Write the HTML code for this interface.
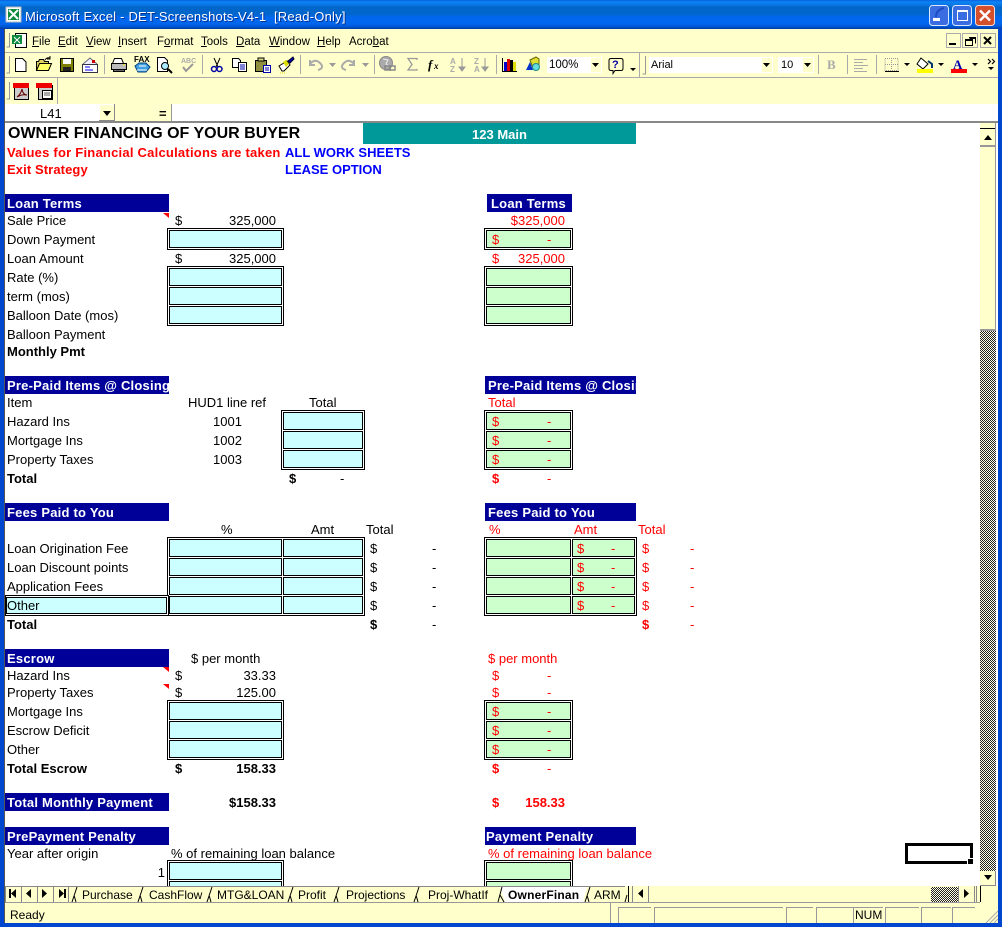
<!DOCTYPE html>
<html><head><meta charset="utf-8"><style>
html,body{margin:0;padding:0;width:1002px;height:927px;overflow:hidden;background:#fff}
body{position:relative;font-family:"Liberation Sans",sans-serif}
div,span,svg{position:absolute}
span{white-space:nowrap;font-size:13px;line-height:16px;color:#000;margin-top:1px}
span.m{font-size:11.5px}
u{text-decoration:underline}
.r{color:#f00}.bd{font-weight:bold}.bl{color:#00f}
.h{background:#000099;height:18px;overflow:hidden}
.h span{color:#fff;font-weight:bold;top:1px;left:2px;letter-spacing:.22px}
.o{border:1px solid #000;background:#fff;box-sizing:border-box}
.c{border:1px solid #000;box-sizing:border-box;height:20px;background:#ccffff}
.g{background:#ccffcc}
.ck{background:conic-gradient(#222 25%,#ffffe8 0 50%,#222 0 75%,#ffffe8 0) 0 0/2px 2px}
.cr{background:#ffffcc}
.st{top:907px;height:16px;border-left:1px solid #999;border-top:1px solid #999;box-sizing:border-box}
</style></head><body>

<!-- title bar -->
<div style="left:0;top:0;width:1002px;height:29px;background:linear-gradient(#0a5fe0 0,#0a86f5 2px,#0a74e6 5px,#0066c8 7px,#0066cc 14px,#0068ee 17px,#0066ee 24px,#0052d0 27px,#003c9c 29px)"></div>
<span style="left:25px;top:8px;color:#fff;font-size:13px;letter-spacing:.21px;text-shadow:1px 1px 0 #003090">Microsoft Excel - DET-Screenshots-V4-1&nbsp; [Read-Only]</span>

<!-- chrome base -->
<div class="cr" style="left:4px;top:29px;width:994px;height:75px"></div>
<div style="left:4px;top:52px;width:994px;height:1px;background:#aaa"></div>
<div style="left:4px;top:77px;width:994px;height:1px;background:#aaa"></div>
<div style="left:57px;top:78px;width:1px;height:26px;background:#aaa"></div>

<!-- menu -->
<span class="m" style="left:32px;top:33px"><u>F</u>ile</span>
<span class="m" style="left:58px;top:33px"><u>E</u>dit</span>
<span class="m" style="left:86px;top:33px"><u>V</u>iew</span>
<span class="m" style="left:118px;top:33px"><u>I</u>nsert</span>
<span class="m" style="left:157px;top:33px">F<u>o</u>rmat</span>
<span class="m" style="left:201px;top:33px"><u>T</u>ools</span>
<span class="m" style="left:236px;top:33px"><u>D</u>ata</span>
<span class="m" style="left:269px;top:33px"><u>W</u>indow</span>
<span class="m" style="left:317px;top:33px"><u>H</u>elp</span>
<span class="m" style="left:349px;top:33px">Acro<u>b</u>at</span>

<!-- toolbar boxes -->
<div style="left:547px;top:57px;width:55px;height:16px;background:#fff"></div>
<div class="cr" style="left:591px;top:58px;width:10px;height:14px"></div>
<span class="m" style="left:549px;top:56px">100%</span>
<div style="left:649px;top:57px;width:124px;height:16px;background:#fff"></div>
<div class="cr" style="left:762px;top:58px;width:10px;height:14px"></div>
<span class="m" style="left:651px;top:56px;font-size:11px">Arial</span>
<div style="left:778px;top:57px;width:36px;height:16px;background:#fff"></div>
<div class="cr" style="left:803px;top:58px;width:10px;height:14px"></div>
<span class="m" style="left:781px;top:56px;font-size:11px">10</span>

<!-- formula row -->
<div style="left:4px;top:104px;width:994px;height:18px;background:#fff"></div>
<div class="cr" style="left:99px;top:104px;width:73px;height:18px"></div>
<div style="left:171px;top:104px;width:1px;height:18px;background:#999"></div>
<div class="cr" style="left:99px;top:104px;width:16px;height:17px;box-shadow:inset -1px -1px 0 #888,inset 1px 1px 0 #fff"></div>
<svg style="left:99px;top:104px" width="16" height="17"><path d="M4 7h8l-4 5z" fill="#000"/></svg>
<span style="left:40px;top:105px">L41</span>
<span class="bd" style="left:159px;top:105px">=</span>
<div style="left:4px;top:121px;width:994px;height:2px;background:#888"></div>

<!-- SVG icons -->
<svg style="left:0;top:0" width="1002" height="104" viewBox="0 0 1002 104">
<!-- title icon -->
<rect x="6" y="7" width="15" height="15" fill="#fff" stroke="#bbb"/><rect x="8" y="9" width="11" height="11" fill="#0f8a3c"/><path d="M9 10l9 9M18 10l-9 9" stroke="#fff" stroke-width="2"/>
<!-- window buttons -->
<rect x="929.5" y="5.5" width="19" height="20" rx="3" fill="#3a6ee0" stroke="#dce8ff"/><rect x="933" y="18" width="7" height="3" fill="#fff"/><path d="M944 8q-8 2-8 9" stroke="#1c4cc4" stroke-width="2" fill="none"/>
<rect x="952.5" y="5.5" width="19" height="20" rx="3" fill="#3a6ee0" stroke="#dce8ff"/><rect x="957.5" y="11.5" width="10" height="9" fill="none" stroke="#fff"/><rect x="957" y="10" width="11" height="2" fill="#fff"/>
<rect x="975.5" y="5.5" width="19" height="20" rx="3" fill="#d4502c" stroke="#f4dcd4"/><path d="M980 10.5l10 10M990 10.5l-10 10" stroke="#fff" stroke-width="2.4"/>
<!-- grips -->
<path d="M9.5 33v14h-3M9.5 56v17h-3M9.5 82v17h-3M645.5 56v18h-3" stroke="#999" fill="none"/>
<!-- menu doc icon -->
<rect x="15.5" y="33.5" width="11" height="14" fill="#fff" stroke="#000"/><rect x="12" y="35" width="10" height="9" fill="#0a8a3a"/><path d="M14 37l6 6M20 37l-6 6" stroke="#fff"/>
<!-- mdi buttons -->
<g fill="#ffffcc" stroke="#aaa"><rect x="946.5" y="33.5" width="14" height="14"/><rect x="962.5" y="33.5" width="15" height="14"/><rect x="980.5" y="33.5" width="15" height="14"/></g>
<rect x="949" y="43" width="7" height="2" fill="#000"/>
<path d="M969.5 38.5h6v5M965.5 40.5h7v5h-7z" stroke="#000" fill="none"/><path d="M969 37.5h7M965 39.5h8" stroke="#000"/>
<path d="M984 37l7 7M991 37l-7 7" stroke="#000" stroke-width="2"/>
<!-- new -->
<path d="M15.5 58.5h7l3.5 3.5v9.500h-10.500z" fill="#fff" stroke="#000"/>
<!-- open -->
<path d="M36.500 70.500v-9h2l1-2h4l1 2h4v2" fill="#e0d060" stroke="#000"/><path d="M36.500 70.500l3-7h12l-3 7z" fill="#ffff66" stroke="#000"/><path d="M45 60q2-3 5-2M50 56v3h-3" fill="none" stroke="#000"/>
<!-- save -->
<rect x="60.500" y="58.500" width="13" height="13" fill="#808000" stroke="#000"/><rect x="63" y="59" width="8" height="5" fill="#fff"/><rect x="63" y="67" width="8" height="4" fill="#222"/>
<!-- mail preview -->
<path d="M83 64l7-6 7 6" fill="#eef" stroke="#667"/><rect x="82.500" y="64.500" width="15" height="8" fill="#fff" stroke="#334"/><path d="M85 67h5M85 70h8" stroke="#00f"/><rect x="92" y="60" width="3" height="3" fill="#c00"/>
<!-- print -->
<path d="M114.500 58.500h7l2 5h-11z" fill="#fff" stroke="#000"/><rect x="111.500" y="63.500" width="15" height="6" fill="#bbb" stroke="#000"/><rect x="113.500" y="69.500" width="11" height="2" fill="#666" stroke="#000"/><path d="M123 65h2" stroke="#ff0"/>
<!-- fax -->
<text x="134" y="62" font-family="Liberation Sans" font-size="8" font-weight="bold" fill="#000">FAX</text>
<path d="M135 66l4-3h7l4 4-4 5h-8z" fill="#40a0e0" stroke="#004080"/><path d="M139 66h7M137 70h10" stroke="#fff"/>
<!-- preview -->
<path d="M157.500 57.500h7l3 3v11h-10z" fill="#fff" stroke="#000"/><circle cx="165" cy="66" r="3.500" fill="#aef" stroke="#000"/><path d="M168 69l4 4" stroke="#000" stroke-width="2"/>
<!-- spell -->
<text x="181" y="63" font-family="Liberation Sans" font-size="7" font-weight="bold" fill="#aaa">ABC</text><path d="M183 67l3 4 7-7" stroke="#999" stroke-width="2" fill="none"/>
<!-- seps -->
<path d="M104.500 55v19M202.500 55v19M300.500 55v19M374.500 55v19M496.500 55v19M639.500 52v25M818.500 55v19M847.500 55v19M876.500 55v19" stroke="#aaa"/>
<!-- cut -->
<path d="M214 58l4 9M220 58l-4 9" stroke="#000"/><circle cx="214" cy="69" r="2.500" fill="none" stroke="#00a" stroke-width="1.500"/><circle cx="219.500" cy="69" r="2.500" fill="none" stroke="#00a" stroke-width="1.500"/>
<!-- copy -->
<path d="M232.500 58.500h6l2 2v7h-8z" fill="#fff" stroke="#000"/><rect x="238.500" y="62.500" width="8" height="9" fill="#fff" stroke="#000"/><path d="M240 65h5M240 67h5M240 69h5" stroke="#00a"/>
<!-- paste -->
<rect x="255.500" y="60.500" width="11" height="11" fill="#909040" stroke="#000"/><rect x="258" y="58" width="6" height="3" fill="#dd8" stroke="#000"/><rect x="263.500" y="65.500" width="7" height="7" fill="#fff" stroke="#00a"/><path d="M265 68h4M265 70h4" stroke="#00a"/>
<!-- brush -->
<path d="M279 66l8-5 3 4-6 6h-2z" fill="#fff" stroke="#000"/><path d="M283 62l3 5 3-3-3-4z" fill="#dd0"/><path d="M288 61l5-4 1 2-4 4z" fill="#00a" stroke="#003"/><path d="M280 73h6" stroke="#dd0" stroke-dasharray="1 1"/>
<!-- undo/redo -->
<path d="M310 60v5h5M310 64q5-6 10-1t-2 7" stroke="#aaa" stroke-width="2" fill="none"/><path d="M329 63h7l-3.500 4z" fill="#999"/>
<path d="M354 60v5h-5M354 64q-5-6-10-1t2 7" stroke="#aaa" stroke-width="2" fill="none"/><path d="M362 63h7l-3.500 4z" fill="#999"/>
<!-- globe -->
<circle cx="386" cy="63" r="6.500" fill="#aaa" stroke="#888"/><path d="M383 59l5 1-2 4 3 2" stroke="#eee" fill="none"/><rect x="385" y="66" width="5" height="4" fill="none" stroke="#888" stroke-width="1.500"/><rect x="390" y="66" width="5" height="4" fill="none" stroke="#888" stroke-width="1.500"/>
<!-- sigma -->
<path d="M417 60v-1.500h-9l4 6-4 5.500h9v-1" fill="none" stroke="#999" stroke-width="1.300"/>
<!-- fx -->
<text x="428" y="69" font-family="Liberation Serif" font-size="13" font-style="italic" font-weight="bold" fill="#000">f</text><text x="434" y="69" font-family="Liberation Serif" font-size="9" font-style="italic" font-weight="bold" fill="#000">x</text>
<!-- sort -->
<text x="450" y="64" font-family="Liberation Sans" font-size="8" font-weight="bold" fill="#aaa">A</text><text x="450" y="72" font-family="Liberation Sans" font-size="8" font-weight="bold" fill="#aaa">Z</text><path d="M462 58v12M459 67l3 4 3-4z" stroke="#999" fill="#999"/>
<text x="474" y="64" font-family="Liberation Sans" font-size="8" font-weight="bold" fill="#aaa">Z</text><text x="474" y="72" font-family="Liberation Sans" font-size="8" font-weight="bold" fill="#aaa">A</text><path d="M485 58v12M482 67l3 4 3-4z" stroke="#999" fill="#999"/>
<!-- chart -->
<path d="M502.500 58v13.500H517" stroke="#000" fill="none"/><rect x="504" y="62" width="3" height="9" fill="#00c"/><rect x="507" y="59" width="3" height="12" fill="#d00"/><rect x="510" y="60" width="3" height="11" fill="#000"/><rect x="513" y="62" width="3" height="9" fill="#dd0"/>
<!-- map -->
<path d="M530 60l6-3 3 2v6l-6 3z" fill="#dd3" stroke="#660"/><path d="M526 70l4-8 3 8z" fill="#03c"/><circle cx="536" cy="67" r="3.500" fill="#6dd" stroke="#288"/>
<!-- dropdowns -->
<g fill="#000"><path d="M592 63h7l-3.500 4zM630 68h6l-3 3zM763 63h7l-3.500 4zM804 63h7l-3.500 4zM904 63h6l-3 3zM938 63h6l-3 3zM972 63h6l-3 3zM988 67h6l-3 3z"/></g>
<!-- help -->
<path d="M611 58.500h10q2 0 2 2v8q0 2-2 2h-6l-2 3v-3h-2q-2 0-2-2v-8q0-2 2-2z" fill="#ffffcc" stroke="#000"/><text x="612" y="68" font-family="Liberation Sans" font-size="11" font-weight="bold" fill="#00a">?</text>
<!-- B -->
<text x="827" y="69" font-family="Liberation Serif" font-size="13" font-weight="bold" fill="#aaa">B</text>
<!-- align -->
<path d="M854 59.500h13M854 62.500h9M854 65.500h14M854 68.500h9M854 71.500h13" stroke="#aaa"/>
<!-- borders -->
<path d="M885 58.500h13v12h-13zM891.500 58v12M885 64.500h13" stroke="#999" stroke-dasharray="1 1" fill="none"/><path d="M885 71.500h14" stroke="#000"/>
<!-- fill -->
<path d="M921 58l7 6-5 5-6-5z" fill="#fff" stroke="#000"/><path d="M928 61l4 3v4" stroke="#036" stroke-width="2" fill="none"/><rect x="917" y="69" width="16" height="4" fill="#ff0"/>
<!-- font colour -->
<text x="953" y="69" font-family="Liberation Serif" font-size="13" font-weight="bold" fill="#00a">A</text><rect x="951" y="69" width="16" height="4" fill="#f00"/>
<!-- chevrons -->
<path d="M988 59l2.500 2.500-2.500 2.500M992 59l2.500 2.500-2.500 2.500" stroke="#000" stroke-width="1.200" fill="none"/>
<!-- pdf -->
<rect x="14.500" y="83.500" width="14" height="16" fill="#ccc" stroke="#000"/><rect x="13" y="83" width="16" height="5" fill="#e00"/><path d="M17 97q4-3 5-8 1 6 5 6-5-1-10 2" fill="none" stroke="#600"/>
<rect x="38.500" y="85.500" width="14" height="14" fill="#ccc" stroke="#000"/><rect x="36" y="83" width="16" height="5" fill="#e00"/><rect x="42.500" y="90.500" width="9" height="8" fill="#fff" stroke="#000"/><path d="M44 93h6M44 95h6" stroke="#555"/>
</svg>

<!-- sheet text and cells -->
<div style="left:363px;top:123px;width:273px;height:21px;background:#009999"></div>
<span class="bd" style="left:363px;width:273px;text-align:center;top:126px;color:#fff">123 Main</span>
<span class="bd" style="left:8px;top:125px;font-size:16px">OWNER FINANCING OF YOUR BUYER</span>
<span class="bd r" style="left:7px;top:144px;letter-spacing:.23px">Values for Financial Calculations are taken</span>
<span class="bd bl" style="left:285px;top:144px">ALL WORK SHEETS</span>
<span class="bd r" style="left:7px;top:161px;letter-spacing:.1px">Exit Strategy</span>
<span class="bd bl" style="left:285px;top:161px">LEASE OPTION</span>

<!-- Loan terms left -->
<div class="h" style="left:5px;top:194px;width:164px"><span>Loan Terms</span></div>
<svg style="left:160px;top:212px" width="10" height="8"><path d="M3 1h6v5z" fill="#f00"/></svg>
<span style="left:7px;top:212px">Sale Price</span>
<span style="left:175px;top:212px">$</span><span style="right:726px;top:212px">325,000</span>
<span style="left:7px;top:231px">Down Payment</span>
<span style="left:7px;top:250px">Loan Amount</span>
<span style="left:175px;top:250px">$</span><span style="right:726px;top:250px">325,000</span>
<span style="left:7px;top:269px">Rate (%)</span>
<span style="left:7px;top:288px">term (mos)</span>
<span style="left:7px;top:307px">Balloon Date (mos)</span>
<span style="left:7px;top:326px">Balloon Payment</span>
<span class="bd" style="left:7px;top:343px">Monthly Pmt</span>
<div class="o" style="left:167px;top:228px;width:117px;height:22px"></div><div class="c" style="left:169px;top:230px;width:113px;height:18px"></div>
<div class="o" style="left:167px;top:266px;width:117px;height:60px"></div>
<div class="c" style="left:169px;top:268px;width:113px;height:18px"></div><div class="c" style="left:169px;top:287px;width:113px;height:18px"></div><div class="c" style="left:169px;top:306px;width:113px;height:18px"></div>

<!-- Loan terms right -->
<div class="h" style="left:487px;top:194px;width:85px"><span style="left:4px">Loan Terms</span></div>
<span class="r" style="right:437px;top:212px">$325,000</span>
<div class="o" style="left:484px;top:228px;width:89px;height:22px"></div><div class="c g" style="left:486px;top:230px;width:85px;height:18px"></div>
<span class="r" style="left:492px;top:231px">$</span><span class="r" style="left:547px;top:231px">-</span>
<span class="r" style="left:492px;top:250px">$</span><span class="r" style="right:437px;top:250px">325,000</span>
<div class="o" style="left:484px;top:266px;width:89px;height:60px"></div>
<div class="c g" style="left:486px;top:268px;width:85px;height:18px"></div><div class="c g" style="left:486px;top:287px;width:85px;height:18px"></div><div class="c g" style="left:486px;top:306px;width:85px;height:18px"></div>

<!-- Prepaid left -->
<div class="h" style="left:5px;top:376px;width:164px"><span>Pre-Paid Items @ Closing</span></div>
<span style="left:7px;top:394px">Item</span><span style="left:188px;top:394px">HUD1 line ref</span><span style="left:309px;top:394px">Total</span>
<span style="left:7px;top:413px">Hazard Ins</span><span style="left:213px;top:413px">1001</span>
<span style="left:7px;top:432px">Mortgage Ins</span><span style="left:213px;top:432px">1002</span>
<span style="left:7px;top:451px">Property Taxes</span><span style="left:213px;top:451px">1003</span>
<span class="bd" style="left:7px;top:470px">Total</span><span class="bd" style="left:289px;top:470px">$</span><span style="left:340px;top:470px">-</span>
<div class="o" style="left:281px;top:410px;width:84px;height:60px"></div>
<div class="c" style="left:283px;top:412px;width:80px;height:18px"></div><div class="c" style="left:283px;top:431px;width:80px;height:18px"></div><div class="c" style="left:283px;top:450px;width:80px;height:18px"></div>

<!-- Prepaid right -->
<div class="h" style="left:485px;top:376px;width:151px"><span style="left:3px">Pre-Paid Items @ Closing</span></div>
<span class="r" style="left:488px;top:394px">Total</span>
<div class="o" style="left:484px;top:410px;width:89px;height:60px"></div>
<div class="c g" style="left:486px;top:412px;width:85px;height:18px"></div><div class="c g" style="left:486px;top:431px;width:85px;height:18px"></div><div class="c g" style="left:486px;top:450px;width:85px;height:18px"></div>
<span class="r" style="left:492px;top:413px">$</span><span class="r" style="left:547px;top:413px">-</span>
<span class="r" style="left:492px;top:432px">$</span><span class="r" style="left:547px;top:432px">-</span>
<span class="r" style="left:492px;top:451px">$</span><span class="r" style="left:547px;top:451px">-</span>
<span class="r bd" style="left:492px;top:470px">$</span><span class="r" style="left:547px;top:470px">-</span>

<!-- Fees left -->
<div class="h" style="left:5px;top:503px;width:164px"><span>Fees Paid to You</span></div>
<span style="left:221px;top:521px">%</span><span style="left:311px;top:521px">Amt</span><span style="left:366px;top:521px">Total</span>
<div class="o" style="left:167px;top:537px;width:198px;height:79px"></div>
<div class="o" style="left:5px;top:595px;width:164px;height:21px"></div>
<div class="c" style="left:6px;top:597px;width:161px;height:17px"></div>
<div class="c" style="left:169px;top:539px;width:113px;height:18px"></div><div class="c" style="left:283px;top:539px;width:80px;height:18px"></div>
<div class="c" style="left:169px;top:558px;width:113px;height:18px"></div><div class="c" style="left:283px;top:558px;width:80px;height:18px"></div>
<div class="c" style="left:169px;top:577px;width:113px;height:18px"></div><div class="c" style="left:283px;top:577px;width:80px;height:18px"></div>
<div class="c" style="left:169px;top:596px;width:113px;height:18px"></div><div class="c" style="left:283px;top:596px;width:80px;height:18px"></div>
<span style="left:7px;top:540px">Loan Origination Fee</span><span style="left:370px;top:540px">$</span><span style="left:432px;top:540px">-</span>
<span style="left:7px;top:559px">Loan Discount points</span><span style="left:370px;top:559px">$</span><span style="left:432px;top:559px">-</span>
<span style="left:7px;top:578px">Application Fees</span><span style="left:370px;top:578px">$</span><span style="left:432px;top:578px">-</span>
<span style="left:7px;top:597px">Other</span><span style="left:370px;top:597px">$</span><span style="left:432px;top:597px">-</span>
<span class="bd" style="left:7px;top:616px">Total</span><span class="bd" style="left:370px;top:616px">$</span><span style="left:432px;top:616px">-</span>

<!-- Fees right -->
<div class="h" style="left:485px;top:503px;width:151px"><span style="left:3px">Fees Paid to You</span></div>
<span class="r" style="left:489px;top:521px">%</span><span class="r" style="left:574px;top:521px">Amt</span><span class="r" style="left:638px;top:521px">Total</span>
<div class="o" style="left:484px;top:537px;width:153px;height:79px"></div>
<div class="c g" style="left:486px;top:539px;width:85px;height:18px"></div><div class="c g" style="left:572px;top:539px;width:63px;height:18px"></div>
<div class="c g" style="left:486px;top:558px;width:85px;height:18px"></div><div class="c g" style="left:572px;top:558px;width:63px;height:18px"></div>
<div class="c g" style="left:486px;top:577px;width:85px;height:18px"></div><div class="c g" style="left:572px;top:577px;width:63px;height:18px"></div>
<div class="c g" style="left:486px;top:596px;width:85px;height:18px"></div><div class="c g" style="left:572px;top:596px;width:63px;height:18px"></div>
<span class="r" style="left:577px;top:540px">$</span><span class="r" style="left:611px;top:540px">-</span><span class="r" style="left:642px;top:540px">$</span><span class="r" style="left:690px;top:540px">-</span>
<span class="r" style="left:577px;top:559px">$</span><span class="r" style="left:611px;top:559px">-</span><span class="r" style="left:642px;top:559px">$</span><span class="r" style="left:690px;top:559px">-</span>
<span class="r" style="left:577px;top:578px">$</span><span class="r" style="left:611px;top:578px">-</span><span class="r" style="left:642px;top:578px">$</span><span class="r" style="left:690px;top:578px">-</span>
<span class="r" style="left:577px;top:597px">$</span><span class="r" style="left:611px;top:597px">-</span><span class="r" style="left:642px;top:597px">$</span><span class="r" style="left:690px;top:597px">-</span>
<span class="r bd" style="left:642px;top:616px">$</span><span class="r" style="left:690px;top:616px">-</span>

<!-- Escrow left -->
<div class="h" style="left:5px;top:649px;width:164px"><span>Escrow</span></div>
<svg style="left:160px;top:667px" width="10" height="8"><path d="M3 0h6v5z" fill="#f00"/></svg>
<svg style="left:160px;top:684px" width="10" height="8"><path d="M3 0h6v5z" fill="#f00"/></svg>
<span style="left:191px;top:650px">$ per month</span>
<span style="left:7px;top:667px">Hazard Ins</span><span style="left:175px;top:667px">$</span><span style="right:726px;top:667px">33.33</span>
<span style="left:7px;top:684px">Property Taxes</span><span style="left:175px;top:684px">$</span><span style="right:726px;top:684px">125.00</span>
<span style="left:7px;top:703px">Mortgage Ins</span>
<span style="left:7px;top:722px">Escrow Deficit</span>
<span style="left:7px;top:741px">Other</span>
<span class="bd" style="left:7px;top:760px">Total Escrow</span><span class="bd" style="left:175px;top:760px">$</span><span class="bd" style="right:726px;top:760px">158.33</span>
<div class="o" style="left:167px;top:700px;width:117px;height:60px"></div>
<div class="c" style="left:169px;top:702px;width:113px;height:18px"></div><div class="c" style="left:169px;top:721px;width:113px;height:18px"></div><div class="c" style="left:169px;top:740px;width:113px;height:18px"></div>

<!-- Escrow right -->
<span class="r" style="left:488px;top:650px">$ per month</span>
<span class="r" style="left:492px;top:667px">$</span><span class="r" style="left:547px;top:667px">-</span>
<span class="r" style="left:492px;top:684px">$</span><span class="r" style="left:547px;top:684px">-</span>
<div class="o" style="left:484px;top:700px;width:89px;height:60px"></div>
<div class="c g" style="left:486px;top:702px;width:85px;height:18px"></div><div class="c g" style="left:486px;top:721px;width:85px;height:18px"></div><div class="c g" style="left:486px;top:740px;width:85px;height:18px"></div>
<span class="r" style="left:492px;top:703px">$</span><span class="r" style="left:547px;top:703px">-</span>
<span class="r" style="left:492px;top:722px">$</span><span class="r" style="left:547px;top:722px">-</span>
<span class="r" style="left:492px;top:741px">$</span><span class="r" style="left:547px;top:741px">-</span>
<span class="r bd" style="left:492px;top:760px">$</span><span class="r" style="left:547px;top:760px">-</span>

<!-- Total monthly -->
<div class="h" style="left:5px;top:793px;width:164px"><span>Total Monthly Payment</span></div>
<span class="bd" style="right:726px;top:794px">$158.33</span>
<span class="bd r" style="left:492px;top:794px">$</span><span class="bd r" style="right:437px;top:794px">158.33</span>

<!-- Prepayment -->
<div class="h" style="left:5px;top:827px;width:164px"><span>PrePayment Penalty</span></div>
<div class="h" style="left:485px;top:827px;width:151px"><span style="left:1px">Payment Penalty</span></div>
<span style="left:7px;top:845px">Year after origin</span>
<span style="left:171px;top:845px">% of remaining loan balance</span>
<span class="r" style="left:488px;top:845px">% of remaining loan balance</span>
<span style="right:837px;top:864px">1</span>
<div class="o" style="left:167px;top:860px;width:117px;height:40px"></div>
<div class="c" style="left:169px;top:862px;width:113px;height:18px"></div><div class="c" style="left:169px;top:881px;width:113px;height:18px"></div>
<div class="o" style="left:484px;top:860px;width:89px;height:40px"></div>
<div class="c g" style="left:486px;top:862px;width:85px;height:18px"></div><div class="c g" style="left:486px;top:881px;width:85px;height:18px"></div>

<!-- selection -->
<div style="left:905px;top:843px;width:68px;height:21px;box-sizing:border-box;border:3px solid #000"></div>
<div style="left:968px;top:859px;width:5px;height:5px;background:#000;box-shadow:0 0 0 1px #fff"></div>

<!-- vertical scrollbar -->
<div class="cr" style="left:980px;top:123px;width:16px;height:748px"></div>
<div style="left:980px;top:128px;width:16px;height:1px;background:#000"></div>
<div style="left:980px;top:145px;width:16px;height:2px;background:#999"></div>
<div class="ck" style="left:980px;top:331px;width:16px;height:540px"></div>
<div style="left:980px;top:329px;width:16px;height:2px;background:#999"></div>
<div style="left:995px;top:123px;width:1px;height:207px;background:#999"></div>
<div class="cr" style="left:980px;top:871px;width:16px;height:15px;box-shadow:inset -1px -1px 0 #888"></div>
<svg style="left:980px;top:129px" width="16" height="16"><path d="M4 11h8l-4-5z" fill="#000"/></svg>
<svg style="left:980px;top:871px" width="16" height="15"><path d="M4 4h8l-4 5z" fill="#000"/></svg>

<!-- tabs row -->
<div class="cr" style="left:4px;top:886px;width:994px;height:17px"></div>
<div style="left:5px;top:886px;width:620px;height:1px;background:#888"></div>
<div style="left:4px;top:902px;width:976px;height:1px;background:#999"></div>
<svg style="left:0;top:886px" width="1002" height="17" viewBox="0 0 1002 17">
<path d="M505 16l-5-15h87l-4 15z" fill="#fff"/>
<path d="M5.500 0v16M21.500 0v16M37.500 0v16M53.500 0v16M68.500 0v16" stroke="#888"/>
<path d="M9 3h2v9H9zM16 3v9l-5-4.500zM31 3v9l-5-4.500zM42 3v9l5-4.500zM59 3v9l5-4.500zM64 3h2v9h-2z" fill="#000"/>
<path d="M72 16l5-15M74 9l2 7M138 16l5-15M140 9l2 7M207 16l5-15M209 9l2 7M288 16l5-15M290 9l2 7M334 16l5-15M336 9l2 7M414 16l5-15M416 9l2 7M498 16l4-15M500 9l4 7M585 16l5-15M587 9l2 7M625 16l2-7" stroke="#000" fill="none"/>
<path d="M628.500 0v16" stroke="#000"/><path d="M632.500 0v16M648.500 0v16M958.500 0v16M974.500 0v16M976.500 0v16" stroke="#888"/><path d="M980.500 0v16" stroke="#000"/>
<path d="M643 3v9l-5-4.500zM964 3v9l5-4.500z" fill="#000"/>
</svg>
<div class="ck" style="left:931px;top:887px;width:27px;height:15px"></div>
<span style="left:82px;top:886px;font-size:12px">Purchase</span>
<span style="left:149px;top:886px;font-size:12px">CashFlow</span>
<span style="left:217px;top:886px;font-size:12px">MTG&amp;LOAN</span>
<span style="left:298px;top:886px;font-size:12px">Profit</span>
<span style="left:346px;top:886px;font-size:12px">Projections</span>
<span style="left:428px;top:886px;font-size:12px">Proj-WhatIf</span>
<span class="bd" style="left:508px;top:886px;font-size:12px;letter-spacing:.2px">OwnerFinan</span>
<span style="left:594px;top:886px;font-size:12px">ARM</span>

<!-- status -->
<div class="cr" style="left:4px;top:903px;width:994px;height:20px"></div>
<span style="left:10px;top:906px;font-size:12px">Ready</span>
<div style="left:610px;top:903px;width:1px;height:20px;background:#999"></div>
<div class="st" style="left:618px;width:33px"></div>
<div class="st" style="left:654px;width:129px"></div>
<div class="st" style="left:786px;width:27px"></div>
<div class="st" style="left:816px;width:37px"></div>
<div class="st" style="left:853px;width:30px"></div>
<div class="st" style="left:885px;width:34px"></div>
<div class="st" style="left:921px;width:30px"></div>
<div class="st" style="left:952px;width:23px"></div>
<span style="left:855px;top:906px;font-size:12px">NUM</span>
<svg style="left:984px;top:910px" width="14" height="13"><path d="M2 13L14 1M6 13L14 5M10 13L14 9" stroke="#aaa" fill="none"/></svg>

<!-- window borders -->
<div style="left:0;top:29px;width:4px;height:898px;background:#0047d0"></div>
<div style="left:4px;top:29px;width:1px;height:894px;background:#555"></div>
<div style="left:998px;top:29px;width:4px;height:898px;background:#0047d0"></div>
<div style="left:0;top:923px;width:1002px;height:4px;background:#0047d0"></div>
</body></html>
